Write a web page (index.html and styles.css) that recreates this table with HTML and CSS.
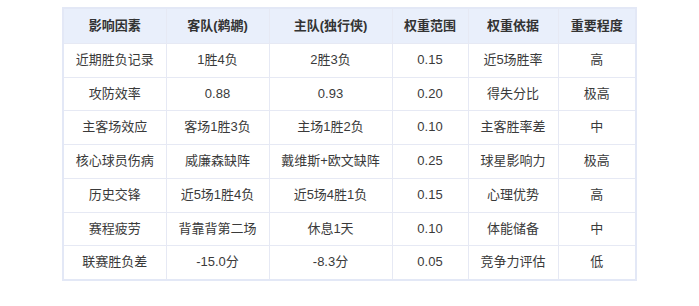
FILE: index.html
```html
<!DOCTYPE html>
<html lang="zh-CN">
<head>
  <meta charset="UTF-8" />
  <title>影响因素</title>
  <link rel="stylesheet" href="styles.css">
</head>
<body>
  <table class="factors">
    <colgroup>
      <col class="c1"><col class="c2"><col class="c3"><col class="c4"><col class="c5"><col class="c6">
    </colgroup>
    <thead>
      <tr>
        <th>影响因素</th>
        <th>客队(鹈鹕)</th>
        <th>主队(独行侠)</th>
        <th>权重范围</th>
        <th>权重依据</th>
        <th>重要程度</th>
      </tr>
    </thead>
    <tbody>
      <tr><td>近期胜负记录</td><td>1胜4负</td><td>2胜3负</td><td>0.15</td><td>近5场胜率</td><td>高</td></tr>
      <tr><td>攻防效率</td><td>0.88</td><td>0.93</td><td>0.20</td><td>得失分比</td><td>极高</td></tr>
      <tr><td>主客场效应</td><td>客场1胜3负</td><td>主场1胜2负</td><td>0.10</td><td>主客胜率差</td><td>中</td></tr>
      <tr><td>核心球员伤病</td><td>威廉森缺阵</td><td>戴维斯+欧文缺阵</td><td>0.25</td><td>球星影响力</td><td>极高</td></tr>
      <tr><td>历史交锋</td><td>近5场1胜4负</td><td>近5场4胜1负</td><td>0.15</td><td>心理优势</td><td>高</td></tr>
      <tr><td>赛程疲劳</td><td>背靠背第二场</td><td>休息1天</td><td>0.10</td><td>体能储备</td><td>中</td></tr>
      <tr><td>联赛胜负差</td><td>-15.0分</td><td>-8.3分</td><td>0.05</td><td>竞争力评估</td><td>低</td></tr>
    </tbody>
  </table>
</body>
</html>
```

FILE: styles.css
```css
body {
  margin: 0;
  padding: 7px 0 0;
  background: #fff;
  font-family: "Liberation Sans", "Noto Sans CJK SC", sans-serif;
  color: #333;
}
.factors {
  border-collapse: collapse;
  margin: 0 auto;
  border: 2px solid #e3e8f6;
  table-layout: fixed;
  width: 573px;
}
.c1 { width: 103px; }
.c2 { width: 103px; }
.c3 { width: 123px; }
.c4 { width: 76px; }
.c5 { width: 90px; }
.c6 { width: 78px; }
th, td {
  border: 1px solid #e6e9f4;
  padding: 8px 4px;
  font-size: 13px;
  line-height: 17px;
  text-align: center;
  white-space: nowrap;
}
th {
  background: #e9effb;
  font-weight: bold;
  color: #333;
  padding: 8px 4px 9px;
}
td {
  padding: 8px 4px 8px;
  line-height: 16.7px;
  color: #3a3a3a;
}
```
